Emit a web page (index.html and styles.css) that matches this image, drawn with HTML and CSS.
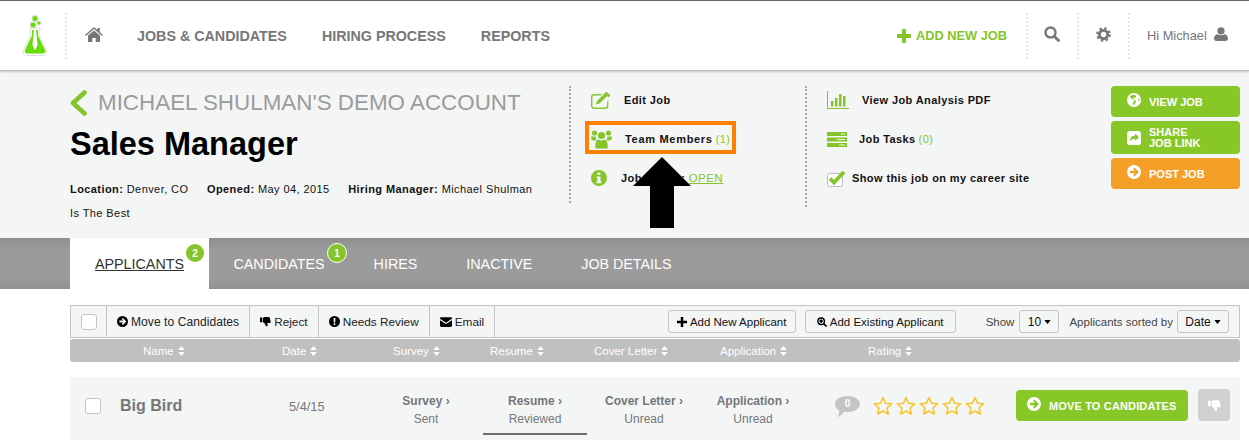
FILE: index.html
```html
<!DOCTYPE html>
<html lang="en">
<head>
<meta charset="utf-8">
<title>Sales Manager</title>
<link rel="stylesheet" href="styles.css">
</head>
<body>
<svg class="sprite" aria-hidden="true">
  <symbol id="arrow-circle" viewBox="0 0 16 16"><path fill-rule="evenodd" d="M8 0a8 8 0 1 1 0 16A8 8 0 0 1 8 0zM8.600 3 6.900 4.700 8.900 6.700H3.500v2.600h5.400l-2 2L8.600 13 13.600 8z"/></symbol>
  <symbol id="thumb" viewBox="0 0 16 16"><path d="M0 2h3.400v7H0zM4.400 2.400 7 1.400h5.600c1 0 1.600.6 1.700 1.400l1.200 5.400c.2 1-.5 1.800-1.500 1.800h-3.400l.6 2.600c.2 1.200-.4 2.400-1.600 2.400-.6 0-1-.4-1.200-1L6.600 10.600 4.400 9z"/></symbol>
  <symbol id="sort" viewBox="0 0 8 12"><path d="M4 0l4 4.800H0zM4 12 0 7.200h8z"/></symbol>
  <symbol id="caret" viewBox="0 0 8 5"><path d="M0 0h8L4 5z"/></symbol>
  <symbol id="star" viewBox="0 0 20 20"><path fill="none" stroke="#f5c62f" stroke-width="1.600" stroke-linejoin="round" d="M10 1.600l2.500 5.600 6.100.7-4.500 4.100 1.200 6-5.300-3-5.300 3 1.200-6-4.500-4.100 6.100-.7z"/></symbol>
</svg>

<nav class="topnav">
  <div class="logo-cell">
    <svg class="logo" viewBox="0 0 26 41">
      <path fill="#fff" stroke="#dcdedc" stroke-width="1" d="M8 13h10v1.500h-.8v5.500l7.300 15c1.200 3-.4 5.500-3 5.500H4.500c-2.600 0-4.200-2.500-3-5.500L8.800 20v-5.500H8z"/>
      <path fill="#66dc0a" d="M10 15h1.800l-.4 6-1 9 2.600 5.500 2.600-5.500-1-9-.4-6H16v5.500l7 14.500c.8 2-.2 3.500-2 3.500H5c-1.800 0-2.800-1.500-2-3.500l7-14.500z"/>
      <circle cx="13" cy="3.500" r="3" fill="#66dc0a" stroke="#dcdedc"/>
      <circle cx="11" cy="10" r="3" fill="#66dc0a" stroke="#dcdedc"/>
      <circle cx="17" cy="8" r="2" fill="#66dc0a" stroke="#dcdedc"/>
    </svg>
  </div>
  <a class="home-link" href="#" aria-label="Home">
    <svg class="icon-home" viewBox="0 0 18 15"><path fill="#75777a" d="M9 0l3.400 3V1h2.400v4.100L18 8l-.9 1L9 2 .9 9 0 8zM9 3.400l6 5.200V15h-4.300v-4H7.300v4H3V8.600z"/></svg>
  </a>
  <a class="nav-link nav-jobs" href="#">JOBS &amp; CANDIDATES</a>
  <a class="nav-link" href="#">HIRING PROCESS</a>
  <a class="nav-link" href="#">REPORTS</a>
  <a class="add-job" href="#">
    <svg class="icon-plus" viewBox="0 0 14 14"><path fill="#85c52a" d="M5 0h4v5h5v4H9v5H5V9H0V5h5z"/></svg>ADD NEW JOB
  </a>
  <div class="nav-cell nav-cell-search">
    <svg class="icon-search" viewBox="0 0 16 16"><circle cx="6.500" cy="6.500" r="5" fill="none" stroke="#75777a" stroke-width="2.400"/><path stroke="#75777a" stroke-width="2.800" stroke-linecap="round" d="M10.500 10.500l4 4"/></svg>
  </div>
  <div class="nav-cell nav-cell-gear">
    <svg class="icon-gear" viewBox="0 0 16 16"><circle cx="8" cy="8" r="4.400" fill="none" stroke="#75777a" stroke-width="3"/><circle cx="8" cy="8" r="6.600" fill="none" stroke="#75777a" stroke-width="2.400" stroke-dasharray="2.600 2.580"/></svg>
  </div>
  <div class="nav-cell nav-cell-user">
    <span>Hi Michael</span>
    <svg class="icon-user" viewBox="0 0 14 14"><circle cx="7" cy="3.800" r="3.600" fill="#75777a"/><path fill="#75777a" d="M0 11.500C0 8.600 2 7.400 3.500 7.200 5.500 8.600 8.500 8.600 10.500 7.200 12 7.400 14 8.600 14 11.500 14 13 13 14 11.800 14H2.200C1 14 0 13 0 11.500z"/></svg>
  </div>
</nav>

<header class="job-header">
  <div class="job-summary">
    <div class="crumb">
      <svg class="icon-back" viewBox="0 0 17 26"><path fill="none" stroke="#85c52a" stroke-width="4.600" stroke-linecap="round" stroke-linejoin="round" d="M14.500 2.500 3 13l11.500 10.500"/></svg>
      <span>MICHAEL SHULMAN'S DEMO ACCOUNT</span>
    </div>
    <h1 class="job-title">Sales Manager</h1>
    <p class="job-meta"><b>Location:</b> Denver, CO <b class="meta-gap">Opened:</b> May 04, 2015 <b class="meta-gap">Hiring Manager:</b> Michael Shulman Is The Best</p>
  </div>

  <div class="action-col action-col-a">
    <div class="action">
      <svg class="ic ic-edit" viewBox="0 0 20 17"><rect x=".7" y="2.700" width="16" height="13.600" rx="2.500" fill="none" stroke="#85c52a" stroke-width="1.400"/><path fill="#f4f6f6" d="M4 13.500 5 8 13 .5h7V6l-8 8z"/><path fill="#85c52a" d="M5 12.500l1-3.500 7.800-7.800 2.600 2.600-7.800 7.800zM14.800.2 16 0l3 3-.2 1.200-1.300 1.200-3.900-3.900z"/></svg>
      <span>Edit Job</span>
    </div>
    <div class="action action-team">
      <svg class="ic ic-team" viewBox="0 0 21 20"><circle cx="10.500" cy="6.500" r="3.600" fill="#85c52a"/><circle cx="3.500" cy="4" r="2.600" fill="#85c52a"/><circle cx="17.500" cy="4" r="2.600" fill="#85c52a"/><path fill="#85c52a" d="M0 7.500h4.500l.8 4H2.800C1 11.500 0 10 0 7.500zM21 7.500h-4.500l-.8 4h2.500C20 11.500 21 10 21 7.500zM4.500 19.500c-.8-4.500.8-8.700 2.500-9 2 1.300 5 1.300 7 0 1.700.3 3.300 4.500 2.500 9z"/></svg>
      <span class="team-label">Team Members</span>
      <span class="count">(1)</span>
    </div>
    <div class="action">
      <svg class="ic ic-info" viewBox="0 0 16 16"><path fill="#85c52a" fill-rule="evenodd" d="M8 0a8 8 0 1 1 0 16A8 8 0 0 1 8 0zM6.500 2.500v2.500h3V2.500zM5.500 6.500v1.800h1v3.200h-1v1.800h5v-1.800h-1v-5z"/></svg>
      <span>Job Status: <a class="status-link" href="#">OPEN</a></span>
    </div>
  </div>

  <div class="action-col action-col-b">
    <div class="action">
      <svg class="ic ic-bars" viewBox="0 0 22 18"><path fill="#85c52a" d="M0 0h1v17h21v1H0zM4 10h2.500v5.500H4zM8 7h2.500v8.500H8zM12 3h2.500v12.500H12zM16 5h2.500v10.500H16z"/></svg>
      <span>View Job Analysis PDF</span>
    </div>
    <div class="action">
      <svg class="ic ic-tasks" viewBox="0 0 20 15"><path fill="#85c52a" fill-rule="evenodd" d="M0 0h20v4H0zM14 1.500v1h4v-1zM0 5.500h20v4H0zM10 7v1h8V7zM0 11h20v4H0zM12 12.500v1h6v-1z"/></svg>
      <span>Job Tasks</span>
      <span class="count">(0)</span>
    </div>
    <div class="action">
      <svg class="ic ic-check" viewBox="0 0 20 17"><rect x=".5" y="3.500" width="15" height="13" rx="2" fill="#fff" stroke="#bbb"/><path fill="none" stroke="#85c52a" stroke-width="3.800" d="M3 8.500l4 4 10-10.500"/></svg>
      <span>Show this job on my career site</span>
    </div>
  </div>

  <div class="cta-col">
    <a class="cta" href="#">
      <svg class="cta-ic" viewBox="0 0 16 16"><path fill="#fff" fill-rule="evenodd" d="M8 0a8 8 0 1 1 0 16A8 8 0 0 1 8 0zM3 3.500 5.500 7l2 .5.500 2.500-1.500 2 1 2 2-2.500 1-2-3-2-1-1.500 2-1 1.500.5.500-2.500-3-1zM12.500 8l1.500 1 .5-2-1-1z"/></svg>
      <span>VIEW JOB</span>
    </a>
    <a class="cta cta-share" href="#">
      <svg class="cta-ic cta-ic-share" viewBox="0 0 14 14"><path fill="#fff" fill-rule="evenodd" d="M2.500 0h9A2.500 2.500 0 0 1 14 2.500v9a2.500 2.500 0 0 1-2.500 2.500h-9A2.500 2.500 0 0 1 0 11.500v-9A2.500 2.500 0 0 1 2.500 0zM8 2.500v2C5 4.700 3 6.500 3 10.500c1-2 2.500-2.800 5-2.800v2.100l4-3.600z"/></svg>
      <span>SHARE<br>JOB LINK</span>
    </a>
    <a class="cta cta-orange" href="#">
      <svg class="cta-ic" viewBox="0 0 16 16"><use href="#arrow-circle" fill="#fff"/></svg>
      <span>POST JOB</span>
    </a>
  </div>
</header>

<div class="tabs">
  <a class="tab tab-active" href="#"><span class="tab-label">APPLICANTS</span><span class="badge badge-a">2</span></a>
  <a class="tab" href="#">CANDIDATES<span class="badge badge-b">1</span></a>
  <a class="tab" href="#">HIRES</a>
  <a class="tab" href="#">INACTIVE</a>
  <a class="tab" href="#">JOB DETAILS</a>
</div>

<main class="content">
  <div class="toolbar">
    <div class="tool tool-check"><span class="checkbox"></span></div>
    <div class="tool tool-move"><svg class="tool-ic" viewBox="0 0 16 16"><use href="#arrow-circle"/></svg>Move to Candidates</div>
    <div class="tool"><svg class="tool-ic" viewBox="0 0 16 16"><use href="#thumb"/></svg>Reject</div>
    <div class="tool"><svg class="tool-ic" viewBox="0 0 16 16"><path fill-rule="evenodd" d="M8 0a8 8 0 1 1 0 16A8 8 0 0 1 8 0zM6.600 3l.3 6.500h2.200L9.400 3zM6.800 10.500v2.500h2.400v-2.500z"/></svg>Needs Review</div>
    <div class="tool"><svg class="tool-ic tool-ic-mail" viewBox="0 0 16 13"><path d="M1.500 0h13A1.500 1.500 0 0 1 16 1.500v.7L8 7.500 0 2.200v-.7A1.500 1.500 0 0 1 1.500 0zM0 4l8 5.300L16 4v7.500a1.500 1.500 0 0 1-1.500 1.500h-13A1.500 1.500 0 0 1 0 11.500z"/></svg>Email</div>
    <button class="btn btn-add" type="button"><svg class="btn-ic" viewBox="0 0 12 12"><path d="M4.500 0h3v4.500H12v3H7.500V12h-3V7.500H0v-3h4.500z"/></svg>Add New Applicant</button>
    <button class="btn btn-existing" type="button"><svg class="btn-ic" viewBox="0 0 12 12"><circle cx="5" cy="5" r="3.900" fill="none" stroke="#000" stroke-width="1.700"/><path stroke="#000" stroke-width="2" d="M8 8l3.400 3.400M3 5h4M5 3v4"/></svg>Add Existing Applicant</button>
    <span class="tool-text tool-show">Show</span>
    <button class="btn btn-select btn-count" type="button">10<svg class="caret" viewBox="0 0 8 5"><use href="#caret"/></svg></button>
    <span class="tool-text tool-sorted">Applicants sorted by</span>
    <button class="btn btn-select btn-date" type="button">Date<svg class="caret" viewBox="0 0 8 5"><use href="#caret"/></svg></button>
  </div>

  <div class="table-head">
    <span>Name<svg class="sort" viewBox="0 0 8 12"><use href="#sort"/></svg></span>
    <span>Date<svg class="sort" viewBox="0 0 8 12"><use href="#sort"/></svg></span>
    <span>Survey<svg class="sort" viewBox="0 0 8 12"><use href="#sort"/></svg></span>
    <span>Resume<svg class="sort" viewBox="0 0 8 12"><use href="#sort"/></svg></span>
    <span>Cover Letter<svg class="sort" viewBox="0 0 8 12"><use href="#sort"/></svg></span>
    <span>Application<svg class="sort" viewBox="0 0 8 12"><use href="#sort"/></svg></span>
    <span>Rating<svg class="sort" viewBox="0 0 8 12"><use href="#sort"/></svg></span>
  </div>

  <div class="row">
    <span class="checkbox row-check"></span>
    <span class="row-name">Big Bird</span>
    <span class="row-date">5/4/15</span>
    <div class="stage"><b>Survey &#8250;</b><span>Sent</span></div>
    <div class="stage stage-current"><b>Resume &#8250;</b><span>Reviewed</span></div>
    <div class="stage"><b>Cover Letter &#8250;</b><span>Unread</span></div>
    <div class="stage"><b>Application &#8250;</b><span>Unread</span></div>
    <div class="comment">
      <svg class="comment-ic" viewBox="0 0 25 21"><path fill="#c4c4c4" d="M12.500 0C19.400 0 25 3.400 25 8s-5.600 8-12.500 8c-1.300 0-2.500-.1-3.600-.3C7.500 18 5.200 20.300 2.500 21c1.200-1.700 1.800-3.800 1.700-6.500C1.600 13 0 10.700 0 8 0 3.400 5.600 0 12.500 0z"/></svg>
      <span class="comment-count">0</span>
    </div>
    <div class="stars">
      <svg class="star" viewBox="0 0 20 20"><use href="#star"/></svg>
      <svg class="star" viewBox="0 0 20 20"><use href="#star"/></svg>
      <svg class="star" viewBox="0 0 20 20"><use href="#star"/></svg>
      <svg class="star" viewBox="0 0 20 20"><use href="#star"/></svg>
      <svg class="star" viewBox="0 0 20 20"><use href="#star"/></svg>
    </div>
    <a class="move-btn" href="#"><svg class="cta-ic" viewBox="0 0 16 16"><use href="#arrow-circle" fill="#fff"/></svg>MOVE TO CANDIDATES</a>
    <a class="reject-btn" href="#" aria-label="Reject"><svg class="reject-ic" viewBox="0 0 16 16"><use href="#thumb" fill="#fff"/></svg></a>
  </div>
</main>

<svg class="big-arrow" viewBox="0 0 58 71" aria-hidden="true"><path d="M29 0l29 29H41v42H17V29H0z"/></svg>
</body>
</html>
```
FILE: styles.css
```css
*, *::before, *::after { box-sizing: border-box; }
html, body { margin: 0; height: 440px; overflow: hidden; }
body { position: relative; background: #fff; font-family: "Liberation Sans", Arial, Helvetica, sans-serif; color: #000; }
a { color: inherit; text-decoration: none; }
.sprite { display: none; }
svg { display: block; flex: none; }

/* top navigation */
.topnav { display: flex; align-items: center; height: 71px; border-top: 1px solid #666; border-bottom: 1px solid #bbb; box-shadow: 0 1px 2px rgba(0,0,0,.18); position: relative; color: #75777a; }
.logo-cell { width: 67px; height: 46px; padding: 2px 0 0 22px; border-right: 2px dotted #e6e6e6; }
.logo { width: 26px; height: 41px; }
.home-link { margin-left: 18px; }
.icon-home { width: 18px; height: 15px; margin-top: -3px; }
.nav-link { font-size: 14.300px; font-weight: 700; margin-left: 35px; }
.nav-jobs { margin-left: 34px; }
.add-job { display: flex; align-items: center; margin-left: auto; color: #85c52a; font-size: 12.800px; font-weight: 700; }
.icon-plus { width: 14px; height: 14px; margin-right: 5px; }
.nav-cell { display: flex; align-items: center; height: 46px; border-left: 2px dotted #e6e6e6; }
.nav-cell-search { width: 51px; margin-left: 19px; padding-left: 16px; }
.nav-cell-gear { width: 51px; padding-left: 17px; }
.nav-cell-user { width: 121px; padding-left: 17px; font-size: 12.800px; }
.icon-search { width: 16px; height: 16px; margin-top: -3px; }
.icon-gear { width: 15px; height: 15px; margin-top: -3px; }
.icon-user { width: 14px; height: 14px; margin: -3px 0 0 7px; }

/* job header */
.job-header { display: flex; height: 167px; padding: 15px 9px 0 70px; background: #f4f6f6; }
.job-summary { width: 499px; flex: none; }
.crumb { display: flex; align-items: center; gap: 11px; height: 34px; color: #9b9b9b; font-size: 22.400px; }
.icon-back { width: 17px; height: 26px; }
.job-title { margin: 3px 0 0; font-size: 32.500px; line-height: 42px; font-weight: 700; }
.job-meta { margin: 12px 0 0; width: 470px; font-size: 11px; line-height: 24px; letter-spacing: .42px; color: #111; }
.meta-gap { margin-left: 15px; }

.action-col { display: flex; flex-direction: column; gap: 11px; width: 236px; flex: none; align-self: flex-start; padding: 0 0 11px 20px; border-left: 2px dotted #aaa; }
.action-col-b { width: 305px; padding-bottom: 15px; }
.action { position: relative; display: flex; align-items: center; height: 28px; font-size: 11px; font-weight: 700; letter-spacing: .4px; color: #111; }
.ic-edit { width: 20px; height: 17px; margin-right: 13px; }
.ic-team { width: 21px; height: 20px; margin-right: 13px; }
.ic-info { width: 16px; height: 16px; margin-right: 14px; }
.ic-bars { width: 22px; height: 18px; margin-right: 13px; }
.ic-tasks { width: 20px; height: 15px; margin-right: 12px; }
.ic-check { width: 20px; height: 17px; margin-right: 5px; }
.team-label { letter-spacing: .7px; }
.count { margin-left: 3px; font-weight: 400; color: #85c52a; }
.status-link { color: #85c52a; font-weight: 400; font-size: 11.500px; text-decoration: underline; }
.action-team::after { content: ""; position: absolute; left: -6px; top: -4px; width: 151px; height: 33px; border: 4px solid #ff8000; }

.cta-col { display: flex; flex-direction: column; gap: 4px; width: 129px; margin-left: auto; flex: none; align-self: flex-start; }
.cta { display: flex; align-items: center; gap: 8px; height: 31px; padding-left: 16px; border-radius: 4px; background: #88c728; color: #fff; font-size: 11px; font-weight: 700; }
.cta-share { height: 33px; line-height: 11px; }
.cta-orange { background: #f4a028; }
.cta-ic { width: 14px; height: 14px; margin-top: -3px; }
.cta-ic-share { margin-top: 0; }

/* tabs */
.tabs { display: flex; height: 51px; padding-left: 70px; background: linear-gradient(#8f8f8f, #9b9b9b 25%, #9b9b9b 80%, #909090); color: #fff; }
.tab { position: relative; display: flex; align-items: center; padding: 0 24.500px; font-size: 14.300px; }
.tab-active { padding: 0 25px; background: #fff; color: #333; }
.tab-label { text-decoration: underline; }
.badge { position: absolute; display: flex; align-items: center; justify-content: center; border-radius: 50%; background: #85c52a; color: #fff; font-size: 10px; font-weight: 700; }
.badge-a { width: 18px; height: 18px; left: 116px; top: 6px; }
.badge-b { width: 20px; height: 20px; left: 118px; top: 5px; border: 1px solid #fff; }

/* list */
.content { padding: 16px 9px 0 70px; }
.toolbar { display: flex; align-items: center; height: 33px; border: 1px solid #c4c4c4; background: #f4f6f6; font-size: 11.800px; color: #222; }
.tool { display: flex; align-items: center; gap: 3px; height: 100%; padding: 0 10px; border-right: 1px solid #c4c4c4; }
.tool-check { width: 36px; padding: 0 0 0 10px; }
.tool-move { font-size: 12px; letter-spacing: .08px; }
.tool-ic { width: 11px; height: 11px; fill: #000; }
.tool-ic-mail { width: 12px; height: 10px; }
.checkbox { display: block; width: 16px; height: 16px; border: 1px solid #c4c4c4; border-radius: 3px; background: #fff; }
.btn { display: flex; align-items: center; justify-content: center; height: 23px; padding: 0; border: 1px solid #c4c4c4; border-radius: 3px; background: #f4f6f6; font: inherit; font-size: 11.500px; color: #111; }
.btn-ic { width: 10px; height: 10px; margin-right: 3px; }
.btn-add { width: 128px; margin-left: auto; }
.btn-existing { width: 151px; margin-left: 9px; }
.tool-text { font-size: 11.500px; color: #444; }
.tool-show { margin-left: 30px; }
.btn-select { margin-left: 5px; font-size: 12px; }
.btn-count { width: 40px; }
.btn-date { width: 52px; margin: 0 10px 0 4px; }
.tool-sorted { margin-left: 10px; }
.caret { width: 7px; height: 4px; margin-left: 3px; }
.table-head { display: grid; grid-template-columns: 139px 111px 97px 104px 126px 148px 1fr; align-items: center; height: 23px; margin-top: 1px; padding-left: 73px; border-radius: 3px; background: #c0c0c0; color: #fff; font-size: 11.500px; }
.table-head span { display: flex; align-items: center; }
.sort { width: 7px; height: 10px; margin-left: 4px; fill: #fff; }

.row { display: flex; align-items: center; height: 63px; margin-top: 15px; padding: 0 0 5px 15px; background: #f4f6f6; }
.row-check { flex: none; }
.row-name { width: 169px; margin-left: 19px; flex: none; font-size: 16px; font-weight: 700; color: #75777a; }
.row-date { width: 85px; flex: none; font-size: 12.800px; color: #75777a; }
.stage { display: flex; flex-direction: column; align-items: center; justify-content: center; gap: 4px; width: 104px; height: 58px; margin-right: 5px; padding-top: 7px; flex: none; font-size: 12px; color: #75777a; }
.stage-current { padding-top: 9px; border-bottom: 2px solid #6e6e6e; }
.comment { position: relative; width: 25px; height: 21px; margin-left: 25px; flex: none; }
.comment-ic { width: 25px; height: 21px; }
.comment-count { position: absolute; left: 0; top: 2px; width: 25px; text-align: center; font-size: 10px; font-weight: 700; color: #fff; }
.stars { display: flex; gap: 3px; margin-left: 13px; }
.star { width: 20px; height: 20px; }
.move-btn { display: flex; align-items: center; gap: 8px; height: 31px; width: 172px; margin: -1px 0 0 31px; padding-left: 11px; border-radius: 4px; background: #88c728; color: #fff; font-size: 11px; font-weight: 700; letter-spacing: .15px; flex: none; }
.reject-btn { display: flex; align-items: center; justify-content: center; width: 32px; height: 32px; margin: -2px 0 0 10px; border-radius: 4px; background: #d0d0d0; flex: none; }
.reject-ic { width: 13px; height: 13px; }

/* annotation drawn over the page */
.big-arrow { position: absolute; left: 633px; top: 157px; width: 58px; height: 71px; fill: #000; }
```
